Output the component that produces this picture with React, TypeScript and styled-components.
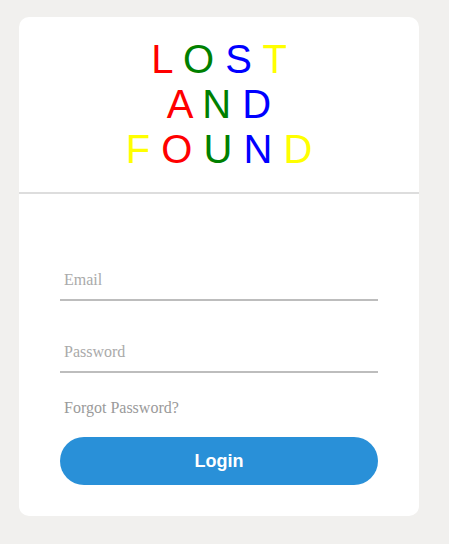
import React from "react";
import styled, { createGlobalStyle } from "styled-components";

const Global = createGlobalStyle`
  html, body { margin: 0; padding: 0; background: #f1f0ee; }
  body { font-family: "Liberation Serif", serif; }
`;

const Page = styled.div`
  padding: 17px 30px 27px 19px;
`;

const Card = styled.div`
  width: 400px;
  background: #fff;
  border-radius: 10px;
  overflow: hidden;
`;

const Header = styled.div`
  padding: 20px 0 20px;
  border-bottom: 2px solid #dddddd;
  text-align: center;
  font-family: "Liberation Sans", Arial, sans-serif;
  font-size: 40px;
  line-height: 45px;
`;

const Line = styled.div`
  white-space: pre;
`;

const Letter = styled.span<{ $c: string }>`
  color: ${(p) => p.$c};
`;

const Form = styled.form`
  padding: 69px 41px 31px 41px;
  display: flex;
  flex-direction: column;
`;

const Input = styled.input`
  display: block;
  width: 100%;
  box-sizing: border-box;
  height: 38px;
  border: none;
  border-bottom: 2px solid #bdbdbd;
  outline: none;
  padding: 0 4px 2px;
  font-family: "Liberation Serif", serif;
  font-size: 16px;
  color: #333;
  background: transparent;
  &::placeholder { color: #aaaaaa; }
`;

const Spacer = styled.div<{ $h: number }>`
  height: ${(p) => p.$h}px;
`;

const Forgot = styled.a`
  display: block;
  padding-left: 4px;
  font-family: "Liberation Serif", serif;
  font-size: 16px;
  line-height: 20px;
  color: #9a9a9a;
  text-decoration: none;
`;

const Button = styled.button`
  width: 100%;
  height: 48px;
  border: none;
  border-radius: 24px;
  background: #2990d8;
  color: #fff;
  font-family: "Liberation Sans", Arial, sans-serif;
  font-weight: bold;
  font-size: 18px;
`;

const lines: [string, string][][] = [
  [["L", "#ff0000"], ["O", "#008000"], ["S", "#0000ff"], ["T", "#ffff00"]],
  [["A", "#ff0000"], ["N", "#008000"], ["D", "#0000ff"]],
  [["F", "#ffff00"], ["O", "#ff0000"], ["U", "#008000"], ["N", "#0000ff"], ["D", "#ffff00"]],
];

export default function App() {
  return (
    <>
      <Global />
      <Page>
        <Card>
          <Header>
            {lines.map((ln, i) => (
              <Line key={i}>
                {ln.map(([ch, c], j) => (
                  <React.Fragment key={j}>
                    {j > 0 ? " " : ""}
                    <Letter $c={c}>{ch}</Letter>
                  </React.Fragment>
                ))}
              </Line>
            ))}
          </Header>
          <Form onSubmit={(e) => e.preventDefault()}>
            <Input type="email" placeholder="Email" />
            <Spacer $h={34} />
            <Input type="password" placeholder="Password" />
            <Spacer $h={25} />
            <Forgot href="#">Forgot Password?</Forgot>
            <Spacer $h={19} />
            <Button type="submit">Login</Button>
          </Form>
        </Card>
      </Page>
    </>
  );
}
